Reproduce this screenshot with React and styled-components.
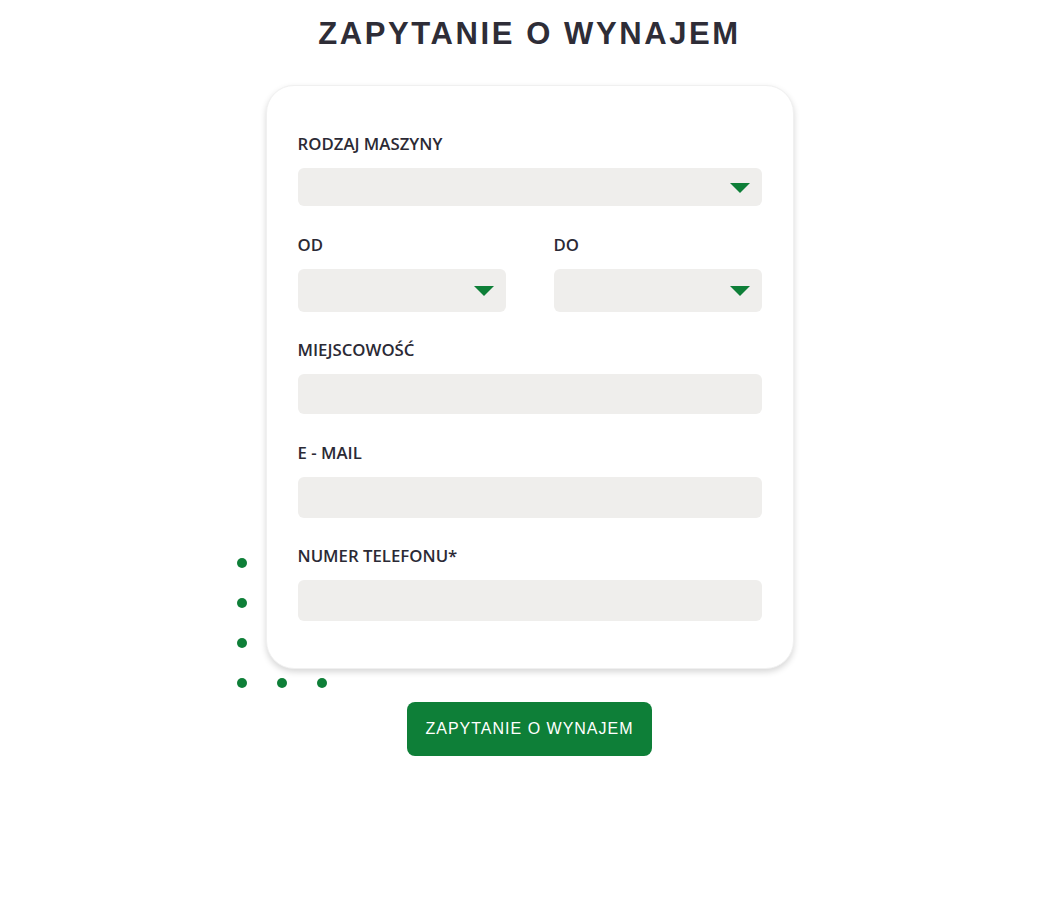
import React from "react";
import styled, { createGlobalStyle } from "styled-components";

const Global = createGlobalStyle`
  * { box-sizing: border-box; }
  body { margin: 0; background: #ffffff; font-family: "Open Sans", "Liberation Sans", sans-serif; }
`;

const Page = styled.div`
  display: flex;
  flex-direction: column;
  align-items: center;
  padding-top: 15px;
`;

const Title = styled.h1`
  margin: 0;
  font-family: "Liberation Sans", Arial, sans-serif;
  font-weight: 700;
  font-size: 31px;
  line-height: 38px;
  letter-spacing: 2.6px;
  color: #2e2d37;
`;

const CardWrap = styled.div`
  position: relative;
  margin-top: 32px;
`;

const Dots = styled.svg`
  position: absolute;
  left: -29px;
  bottom: -19px;
`;

const Card = styled.form`
  position: relative;
  width: 528px;
  background: #fff;
  border: 1px solid #f0f0f0;
  border-radius: 28px;
  box-shadow: 0 3px 6px rgba(0, 0, 0, 0.16);
  padding: 46px 31px 47px;
  display: flex;
  flex-direction: column;
  gap: 26.5px;
`;

const Row = styled.div`
  display: grid;
  grid-template-columns: 1fr 1fr;
  column-gap: 48px;
`;

const Field = styled.div`
  display: flex;
  flex-direction: column;
  gap: 12px;
`;

const Label = styled.label`
  font-family: "Open Sans", sans-serif;
  font-weight: 600;
  font-size: 16.8px;
  line-height: 24px;
  color: #2b2a35;
  text-transform: uppercase;
`;

const Box = styled.div`
  position: relative;
  height: ${(p) => p.$h}px;
  flex: none;
  background: #efeeec;
  border-radius: 6px;
`;

const Arrow = styled.span`
  position: absolute;
  right: 12px;
  top: 50%;
  margin-top: -4px;
  width: 0;
  height: 0;
  border-left: 10px solid transparent;
  border-right: 10px solid transparent;
  border-top: 10px solid #0e7f38;
`;

const Button = styled.button`
  margin-top: 33px;
  width: 245px;
  height: 54px;
  border: none;
  border-radius: 8px;
  background: #0e7f38;
  color: #fff;
  font-family: "Liberation Sans", Arial, sans-serif;
  font-size: 16px;
  letter-spacing: 1px;
  cursor: pointer;
`;

function Select({ h }) {
  return (
    <Box $h={h}>
      <Arrow />
    </Box>
  );
}

export default function App() {
  const dots = [
    [5, 5], [5, 45], [5, 85], [5, 125], [45, 125], [85, 125],
  ];
  return (
    <>
      <Global />
      <Page>
        <Title>ZAPYTANIE O WYNAJEM</Title>
        <CardWrap>
          <Dots width="90" height="130" viewBox="0 0 90 130">
            {dots.map(([x, y], i) => (
              <circle key={i} cx={x} cy={y} r="5" fill="#0e7f38" />
            ))}
          </Dots>
          <Card>
            <Field>
              <Label>Rodzaj maszyny</Label>
              <Select h={38} />
            </Field>
            <Row>
              <Field>
                <Label>OD</Label>
                <Select h={43} />
              </Field>
              <Field>
                <Label>DO</Label>
                <Select h={43} />
              </Field>
            </Row>
            <Field>
              <Label>Miejscowość</Label>
              <Box $h={40} />
            </Field>
            <Field>
              <Label>E - mail</Label>
              <Box $h={41} />
            </Field>
            <Field>
              <Label>Numer telefonu*</Label>
              <Box $h={41} />
            </Field>
          </Card>
        </CardWrap>
        <Button type="button">ZAPYTANIE O WYNAJEM</Button>
      </Page>
    </>
  );
}
